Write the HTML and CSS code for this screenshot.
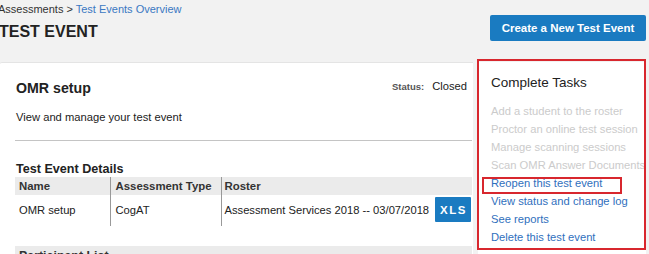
FILE: index.html
```html
<!DOCTYPE html>
<html lang="en">
<head>
<meta charset="utf-8">
<title>Test Event</title>
<link rel="stylesheet" href="styles.css">
</head>
<body>
<div class="page">
  <header class="top">
    <div class="top-left">
      <div class="crumbs">Assessments &gt; <a class="crumb-link" href="#">Test Events Overview</a></div>
      <h1 class="title">TEST EVENT</h1>
    </div>
    <button class="btn-create">Create a New Test Event</button>
  </header>

  <main class="content">
    <section class="card">
      <div class="card-head">
        <h2 class="event-name">OMR setup</h2>
        <div class="status"><span class="status-label">Status:</span><span class="status-value">Closed</span></div>
      </div>
      <p class="desc">View and manage your test event</p>
      <hr class="rule">
      <h3 class="section-title">Test Event Details</h3>
      <table class="details">
        <thead>
          <tr>
            <th class="col-name">Name</th>
            <th class="col-type">Assessment Type</th>
            <th class="col-roster">Roster</th>
          </tr>
        </thead>
        <tbody>
          <tr>
            <td class="col-name">OMR setup</td>
            <td class="col-type">CogAT</td>
            <td class="col-roster"><div class="roster-cell"><span>Assessment Services 2018 -- 03/07/2018</span><button class="btn-xls">XLS</button></div></td>
          </tr>
        </tbody>
      </table>
      <div class="participants">Participant List</div>
    </section>

    <aside class="tasks">
      <h2 class="tasks-title">Complete Tasks</h2>
      <ul class="task-list">
        <li class="task disabled">Add a student to the roster</li>
        <li class="task disabled">Proctor an online test session</li>
        <li class="task disabled">Manage scanning sessions</li>
        <li class="task disabled">Scan OMR Answer Documents</li>
        <li class="task"><a href="#">Reopen this test event</a></li>
        <li class="task"><a href="#">View status and change log</a></li>
        <li class="task"><a href="#">See reports</a></li>
        <li class="task"><a href="#">Delete this test event</a></li>
      </ul>
    </aside>
  </main>

  <div class="mark mark-panel"></div>
  <div class="mark mark-item"></div>
</div>
</body>
</html>
```

FILE: styles.css
```css
* { box-sizing: border-box; }

html, body {
  margin: 0;
  padding: 0;
  height: 100%;
  overflow: hidden;
}

body {
  background: #f2f2f2;
  font-family: "Liberation Sans", Arial, sans-serif;
  font-size: 11.2px;
  color: #222;
}

.page {
  position: relative;
  width: 649px;
  height: 254px;
  overflow: hidden;
}

.top {
  display: flex;
  justify-content: space-between;
  align-items: flex-start;
  height: 62px;
  padding-right: 3px;
}

.top-left {
  margin-left: -2px;
}

.crumbs {
  font-size: 11px;
  line-height: 18px;
  color: #333;
}

.crumb-link {
  color: #3a78c2;
  text-decoration: none;
}

.title {
  margin: 4px 0 0 1px;
  font-size: 16px;
  line-height: 20px;
  font-weight: bold;
  color: #222;
}

.btn-create {
  margin-top: 15px;
  width: 156px;
  height: 26px;
  border: 0;
  border-radius: 2px;
  background: #1a7bc1;
  color: #fff;
  font-family: inherit;
  font-size: 11.5px;
  font-weight: bold;
  padding: 0;
}

.content {
  display: flex;
  align-items: flex-start;
}

.card {
  width: 473px;
  height: 200px;
  background: #fff;
  border-top: 1px solid #e4e4e4;
  border-top-left-radius: 2px;
  padding: 15px 1px 0 15px;
}

.card-head {
  display: flex;
  justify-content: space-between;
  align-items: center;
  height: 20px;
  padding-left: 1px;
}

.event-name {
  margin: 0;
  font-size: 14.2px;
  line-height: 20px;
  font-weight: bold;
  color: #222;
}

.status {
  display: flex;
  align-items: baseline;
  gap: 8px;
  padding-right: 5px;
  margin-top: -4px;
}

.status-label {
  font-size: 9.5px;
  font-weight: bold;
  color: #555;
}

.status-value {
  font-size: 11.2px;
  color: #222;
}

.desc {
  margin: 11px 0 0 1px;
  line-height: 16px;
}

.rule {
  margin: 15px 0 0 0;
  border: 0;
  height: 1px;
  background: #c4c4c4;
}

.section-title {
  margin: 21px 0 0 1px;
  font-size: 12.6px;
  line-height: 15px;
  font-weight: bold;
  color: #222;
}

.details {
  width: 457px;
  border-collapse: collapse;
  table-layout: fixed;
}

.details th {
  height: 18px;
  padding: 0 0 0 5px;
  background: #ebebeb;
  text-align: left;
  font-size: 11.4px;
  font-weight: bold;
  color: #333;
  line-height: 18px;
}

.details td {
  height: 31px;
  padding: 0 0 1px 5px;
  color: #222;
  line-height: 16px;
  vertical-align: middle;
}

.details .col-name { width: 95px; padding-left: 4px; }
.details .col-type { width: 111px; border-left: 1px solid #999; }
.details .col-roster { border-left: 1px solid #999; padding-left: 3px; }
.details td.col-roster { padding-right: 1px; }

.roster-cell {
  display: flex;
  justify-content: space-between;
  align-items: center;
}

.btn-xls {
  width: 36px;
  height: 25px;
  border: 0;
  border-radius: 1px;
  background: #1a7bc1;
  color: #fff;
  font-family: inherit;
  font-size: 11.5px;
  font-weight: bold;
  letter-spacing: 1.5px;
  padding: 0 0 0 1px;
  margin-top: -1px;
}

.participants {
  margin-top: 20px;
  width: 457px;
  height: 30px;
  background: #ebebeb;
  padding: 3px 0 0 4px;
  font-size: 12.4px;
  font-weight: bold;
  color: #333;
}

.tasks {
  width: 168px;
  height: 200px;
  margin-left: 5px;
  background: #fff;
  padding: 12px 0 0 13px;
  overflow: hidden;
  white-space: nowrap;
}

.tasks-title {
  margin: 0;
  font-size: 13.5px;
  line-height: 18px;
  font-weight: normal;
  color: #222;
}

.task-list {
  list-style: none;
  margin: 10px 0 0 0;
  padding: 0;
}

.task {
  line-height: 18px;
}

.task.disabled {
  color: #cbcbcb;
}

.task a {
  color: #2f6fbd;
  text-decoration: none;
}

.mark {
  position: absolute;
  border: 2px solid #d8272e;
  pointer-events: none;
}

.mark-panel {
  left: 477px;
  top: 59px;
  width: 169px;
  height: 191px;
}

.mark-item {
  left: 482px;
  top: 177px;
  width: 140px;
  height: 17px;
}
```
